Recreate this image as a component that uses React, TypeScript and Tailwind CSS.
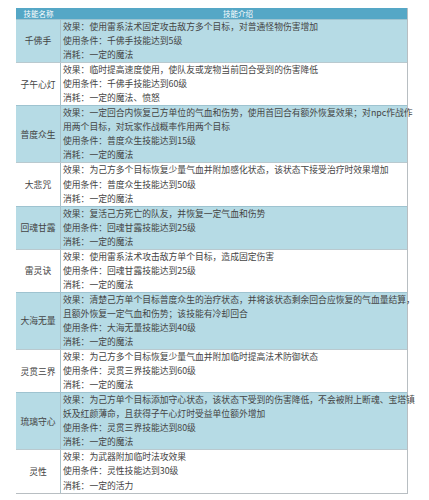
const skills = [
  {
    name: "千佛手",
    lines: [
      "效果：使用雷系法术固定攻击敌方多个目标，对普通怪物伤害增加",
      "使用条件：千佛手技能达到5级",
      "消耗：一定的魔法",
    ],
  },
  {
    name: "子午心灯",
    lines: [
      "效果：临时提高速度使用，使队友或宠物当前回合受到的伤害降低",
      "使用条件：千佛手技能达到60级",
      "消耗：一定的魔法、愤怒",
    ],
  },
  {
    name: "普度众生",
    lines: [
      "效果：一定回合内恢复己方单位的气血和伤势，使用首回合有额外恢复效果；对npc作战作",
      "用两个目标，对玩家作战概率作用两个目标",
      "使用条件：普度众生技能达到15级",
      "消耗：一定的魔法",
    ],
  },
  {
    name: "大悲咒",
    lines: [
      "效果：为己方多个目标恢复少量气血并附加感化状态，该状态下接受治疗时效果增加",
      "使用条件：普度众生技能达到50级",
      "消耗：一定的魔法",
    ],
  },
  {
    name: "回魂甘露",
    lines: [
      "效果：复活己方死亡的队友，并恢复一定气血和伤势",
      "使用条件：回魂甘露技能达到25级",
      "消耗：一定的魔法",
    ],
  },
  {
    name: "雷灵诀",
    lines: [
      "效果：使用雷系法术攻击敌方单个目标，造成固定伤害",
      "使用条件：回魂甘露技能达到25级",
      "消耗：一定的魔法",
    ],
  },
  {
    name: "大海无量",
    lines: [
      "效果：清楚己方单个目标普度众生的治疗状态，并将该状态剩余回合应恢复的气血量结算，",
      "且额外恢复一定气血和伤势；该技能有冷却回合",
      "使用条件：大海无量技能达到40级",
      "消耗：一定的魔法",
    ],
  },
  {
    name: "灵贯三界",
    lines: [
      "效果：为己方多个目标恢复少量气血并附加临时提高法术防御状态",
      "使用条件：灵贯三界技能达到60级",
      "消耗：一定的魔法",
    ],
  },
  {
    name: "琉璃守心",
    lines: [
      "效果：为己方单个目标添加守心状态，该状态下受到的伤害降低，不会被附上断魂、宝塔镇",
      "妖及红颜薄命，且获得子午心灯时受益单位额外增加",
      "使用条件：灵贯三界技能达到80级",
      "消耗：一定的魔法",
    ],
  },
  {
    name: "灵性",
    lines: [
      "效果：为武器附加临时法攻效果",
      "使用条件：灵性技能达到30级",
      "消耗：一定的活力",
    ],
  },
];

export default function App() {
  return (
    <div
      className="w-[429px] h-[500px] bg-white pt-2 pl-4 text-[#444]"
      style={{ fontFamily: '"Noto Sans CJK SC", "Noto Sans", sans-serif' }}
    >
      <div className="w-[392px] border-r border-b border-[#b8bec2]">
        {/* header */}
        <div className="flex h-[11px] bg-[#55a7c6] text-white text-[7.5px] leading-[11px]">
          <div className="w-[45px] text-center">技能名称</div>
          <div className="flex-1 text-center pl-[8px]">技能介绍</div>
        </div>

        {skills.map((s, i) => (
          <div
            key={s.name}
            className={
              i % 2 === 0
                ? "flex border-t border-[#9ec3d0] bg-[#b6dbe5]"
                : "flex border-t border-[#b9c9cf] bg-white"
            }
          >
            <div className="w-[45px] shrink-0 flex items-center justify-center border-r border-[#a9c0c8] text-[8.8px]">
              {s.name}
            </div>
            <div className="flex-1 pl-[2px] text-[8.8px] leading-[14.05px]">
              {s.lines.map((l) => (
                <div key={l} className="whitespace-nowrap">
                  {l}
                </div>
              ))}
            </div>
          </div>
        ))}
      </div>
    </div>
  );
}
